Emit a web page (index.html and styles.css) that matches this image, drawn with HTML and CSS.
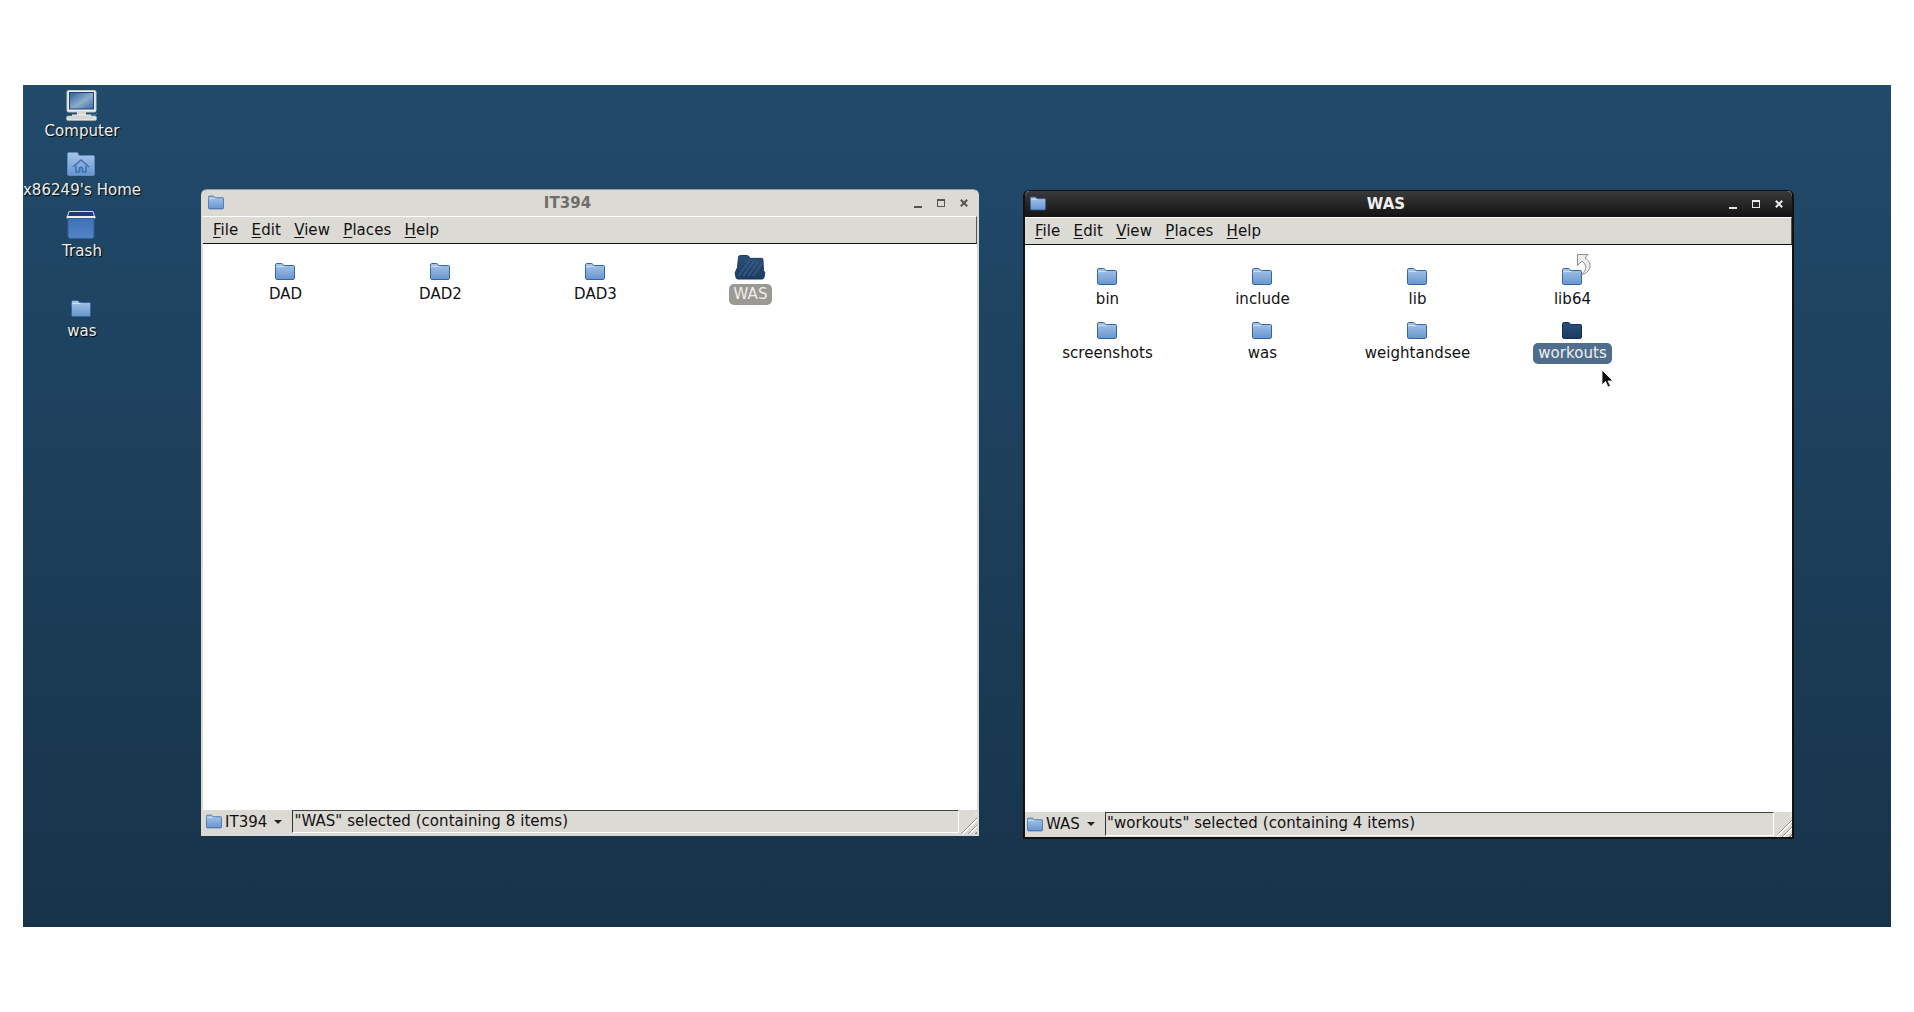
FILE: index.html
```html
<!DOCTYPE html>
<html lang="en">
<head>
    <meta charset="UTF-8">
    <title>Desktop</title>
    <link rel="stylesheet" href="styles.css">
</head>
<body>
    <svg class="defs" width="0" height="0">
        <defs>
            <linearGradient id="blue" x1="0" y1="0" x2="0" y2="1">
                <stop offset="0" stop-color="#a9c6e8"/>
                <stop offset="1" stop-color="#6695cf"/>
            </linearGradient>
            <linearGradient id="navy" x1="0" y1="0" x2="0" y2="1">
                <stop offset="0" stop-color="#2b5079"/>
                <stop offset="1" stop-color="#1b3b61"/>
            </linearGradient>
            <linearGradient id="screen" x1="0" y1="0" x2="1" y2="1">
                <stop offset="0" stop-color="#2f5e9e"/>
                <stop offset="0.55" stop-color="#8eacc9"/>
                <stop offset="1" stop-color="#3a6ba8"/>
            </linearGradient>
            <linearGradient id="bin" x1="0" y1="0" x2="0" y2="1">
                <stop offset="0" stop-color="#3d70b6"/>
                <stop offset="1" stop-color="#5485c6"/>
            </linearGradient>
            <symbol id="folder" viewBox="0 0 20 17">
                <path d="M.5 15V2C.5 1 1 .5 2 .5h4.500C7.500 .5 8 1.500 8.500 2.500H18.500c.6 0 1 .4 1 1V15c0 .8-.5 1.500-1.200 1.500H1.800C1 16.500 .5 15.800 .5 15z" fill="url(#blue)" stroke="#34659f"/>
                <path d="M1 4.500c0-.7.5-1 1-1h7l1-1" fill="none" stroke="#dbe7f5" stroke-width=".8"/>
            </symbol>
            <symbol id="folder-dark" viewBox="0 0 20 17">
                <path d="M.5 15V2C.5 1 1 .5 2 .5h4.500C7.500 .5 8 1.500 8.500 2.500H18.500c.6 0 1 .4 1 1V15c0 .8-.5 1.500-1.200 1.500H1.800C1 16.500 .5 15.800 .5 15z" fill="url(#navy)" stroke="#14304f"/>
            </symbol>
            <symbol id="close" viewBox="0 0 8 8">
                <path d="M.8 .8l6.400 6.400M7.200 .8L.8 7.200" fill="none" stroke="currentColor" stroke-width="2"/>
            </symbol>
        </defs>
    </svg>

    <div class="desktop">
        <div class="desk-icon desk-computer">
            <svg width="32" height="31" viewBox="0 0 32 31">
                <rect x="1" y=".5" width="29" height="21.500" rx="1.500" fill="#eceeea" stroke="#c4c6c1"/>
                <rect x="3.500" y="2.500" width="24" height="16.500" fill="url(#screen)" stroke="#1c3f86"/>
                <rect x="11" y="22" width="9" height="3" fill="#d6d8d3"/>
                <rect x="6" y="24.500" width="19" height="1.500" fill="#f4f5f2"/>
                <rect x=".5" y="26" width="30" height="4.500" rx="1.500" fill="#e4e4e0" stroke="#b0b1ac" stroke-width=".6"/>
                <path d="M2.500 28h26" stroke="#a9aaa5" stroke-dasharray="1 1"/>
                <path d="M25 25h4c1 0 1.500-1 2-2" fill="none" stroke="#5a8fc4"/>
            </svg>
            <span>Computer</span>
        </div>
        <div class="desk-icon desk-home">
            <svg width="28" height="25" viewBox="0 0 28 25">
                <path d="M.5 22V2C.5 1 1 .5 2 .5h8C11 .5 11.500 2 12 3.500h14c1 0 1.500.5 1.500 1.500v17c0 1-.6 1.500-1.500 1.500H2C1 23.500 .5 23 .5 22z" fill="url(#blue)" stroke="#5f8bc0"/>
                <path d="M6 15l8-7 8 7M9 14v6h3.500v-3.500c0-1.500 3-1.500 3 0V20H19v-6" fill="none" stroke="#3f70ad" stroke-width="1.600"/>
            </svg>
            <span>x86249's Home</span>
        </div>
        <div class="desk-icon desk-trash">
            <svg width="30" height="28" viewBox="0 0 30 28">
                <path d="M3 .5h24l1.500 5h-27z" fill="#1f3a7a" stroke="#d8dbd6"/>
                <rect x=".5" y="5" width="29" height="2.500" rx="1" fill="#eceeea"/>
                <path d="M2 7.500h26V25c0 1.500-1 2.500-2.500 2.500h-21C3 27.500 2 26.500 2 25z" fill="url(#bin)" stroke="#2f5f9e"/>
            </svg>
            <span>Trash</span>
        </div>
        <div class="desk-icon desk-was">
            <svg width="20" height="17"><use href="#folder"/></svg>
            <span>was</span>
        </div>

        <section class="window window-back">
            <header class="titlebar">
                <svg class="title-icon" width="16" height="15"><use href="#folder"/></svg>
                <span class="title-text">IT394</span>
                <div class="wm-buttons">
                    <span class="wm-min"></span><span class="wm-max"></span><svg class="wm-close" width="8" height="8"><use href="#close"/></svg>
                </div>
            </header>
            <nav class="menubar">
                <span><u>F</u>ile</span><span><u>E</u>dit</span><span><u>V</u>iew</span><span><u>P</u>laces</span><span><u>H</u>elp</span>
            </nav>
            <main class="files">
                <div class="file"><svg width="20" height="17"><use href="#folder"/></svg><span>DAD</span></div>
                <div class="file"><svg width="20" height="17"><use href="#folder"/></svg><span>DAD2</span></div>
                <div class="file"><svg width="20" height="17"><use href="#folder"/></svg><span>DAD3</span></div>
                <div class="file file-open">
                    <svg width="32" height="25" viewBox="0 0 32 26">
                        <path d="M3 13L4 2.500C4 1 5 .5 6 .5h7c1 0 2 1 3 3h12c1 0 1.500.5 1.500 1.500L30 16l1.500 2.500-1 5c-.2 1-1 1.500-2 1.500H3.500c-1 0-1.800-.5-2-1.500l-1-5z" fill="url(#navy)" stroke="#1a3759"/>
                        <path d="M9 22L21 5M14 22L25 6M19 22l10-14M4 22L16 5" stroke="#3a5f88" stroke-width="2" opacity=".7"/>
                    </svg>
                    <span class="label-back">WAS</span>
                </div>
            </main>
            <footer class="statusbar">
                <div class="location">
                    <svg width="16" height="15"><use href="#folder"/></svg>
                    <span>IT394</span>
                    <i class="caret"></i>
                </div>
                <div class="status-text">"WAS" selected (containing 8 items)</div>
                <div class="grip"></div>
            </footer>
        </section>

        <section class="window window-front">
            <header class="titlebar">
                <svg class="title-icon" width="16" height="15"><use href="#folder"/></svg>
                <span class="title-text">WAS</span>
                <div class="wm-buttons">
                    <span class="wm-min"></span><span class="wm-max"></span><svg class="wm-close" width="8" height="8"><use href="#close"/></svg>
                </div>
            </header>
            <nav class="menubar">
                <span><u>F</u>ile</span><span><u>E</u>dit</span><span><u>V</u>iew</span><span><u>P</u>laces</span><span><u>H</u>elp</span>
            </nav>
            <main class="files">
                <div class="file"><svg width="20" height="17"><use href="#folder"/></svg><span>bin</span></div>
                <div class="file"><svg width="20" height="17"><use href="#folder"/></svg><span>include</span></div>
                <div class="file"><svg width="20" height="17"><use href="#folder"/></svg><span>lib</span></div>
                <div class="file file-link">
                    <svg width="20" height="17"><use href="#folder"/></svg>
                    <svg class="link-arrow" width="15" height="22" viewBox="0 0 15 22">
                        <path d="M.5 .5H11L8 4c3 1.500 5.500 5 5 9-.5 4-5 7-10 8.500 4-2.500 6.500-6.500 5.500-9.500C8 9.500 6 8 5 7L.5 11.500z" fill="#ececea" stroke="#8f908b"/>
                    </svg>
                    <span>lib64</span>
                </div>
                <div class="file"><svg width="20" height="17"><use href="#folder"/></svg><span>screenshots</span></div>
                <div class="file"><svg width="20" height="17"><use href="#folder"/></svg><span>was</span></div>
                <div class="file"><svg width="20" height="17"><use href="#folder"/></svg><span>weightandsee</span></div>
                <div class="file"><svg width="20" height="17"><use href="#folder-dark"/></svg><span class="label-active">workouts</span></div>
                <svg class="cursor" width="13" height="20" viewBox="0 0 13 20">
                    <path d="M1 1v15l3.500-3.500L7 18l2.500-1L7 12h5z" fill="#111" stroke="#fff" stroke-width=".8"/>
                </svg>
            </main>
            <footer class="statusbar">
                <div class="location">
                    <svg width="16" height="15"><use href="#folder"/></svg>
                    <span>WAS</span>
                    <i class="caret"></i>
                </div>
                <div class="status-text">"workouts" selected (containing 4 items)</div>
                <div class="grip"></div>
            </footer>
        </section>
    </div>
</body>
</html>
```

FILE: styles.css
```css
body {
    margin: 0;
    padding: 85px 23px 85px 23px;
    background-color: #fff;
    font-family: "DejaVu Sans", sans-serif;
    font-size: 15px;
    line-height: 18px;
    letter-spacing: .05px;
    color: #111;
}

.defs {
    position: absolute;
}

.desktop {
    position: relative;
    width: 1868px;
    height: 842px;
    overflow: hidden;
    background: linear-gradient(#214a6b, #173349);
}

/* desktop icons */
.desk-icon {
    position: absolute;
    left: 0;
    width: 118px;
    display: flex;
    flex-direction: column;
    align-items: center;
    color: #eee;
    text-shadow: 1px 1px 1px #000;
    white-space: nowrap;
}

.desk-home svg,
.desk-trash svg,
.desk-was svg {
    margin-right: 2px;
}

.desk-computer { top: 5px; }
.desk-computer span { margin-top: 1px; }
.desk-home { top: 67px; }
.desk-home span { margin-top: 4px; }
.desk-trash { top: 126px; }
.desk-trash span { margin-top: 3px; }
.desk-was { top: 215px; }
.desk-was span { margin-top: 5px; }

/* windows */
.window {
    position: absolute;
    display: flex;
    flex-direction: column;
    box-sizing: border-box;
    background-color: #dcdad5;
    border-radius: 6px 6px 0 0;
}

.window-back {
    left: 178px;
    top: 104px;
    width: 778px;
    height: 647px;
    border: 2px solid #dcdad5;
    border-top-color: #9c9a94;
    border-top-width: 1px;
}

.window-front {
    left: 1000px;
    top: 105px;
    width: 771px;
    height: 649px;
    border: 2px solid #111;
    border-top-width: 1px;
}

.titlebar {
    position: relative;
    height: 26px;
    flex-shrink: 0;
    display: flex;
    align-items: center;
    justify-content: center;
    font-weight: bold;
    border-radius: 5px 5px 0 0;
}

.window-back .titlebar {
    color: #6e6e6a;
}

.window-front .titlebar {
    color: #f0f0f0;
    background: linear-gradient(#3a3a3a, #131313);
}

.title-icon {
    position: absolute;
    left: 5px;
    top: 5px;
}

.title-text {
    margin-left: -45px;
}

.wm-buttons {
    position: absolute;
    right: 9px;
    top: 9px;
    display: flex;
    align-items: flex-start;
    gap: 15px;
    color: #55554f;
}

.window-front .wm-buttons {
    color: #e8e8e8;
}

.wm-min {
    width: 8px;
    height: 2px;
    margin-top: 7px;
    background-color: currentColor;
}

.wm-max {
    box-sizing: border-box;
    width: 8px;
    height: 8px;
    border: 1px solid currentColor;
    border-top-width: 2px;
}

.wm-close {
    display: block;
}

.menubar {
    height: 26px;
    flex-shrink: 0;
    display: flex;
    align-items: center;
    gap: 13.3px;
    padding-left: 10px;
    border-top: 1px solid #fff;
    border-bottom: 1px solid #111;
    border-right: 1px solid #555;
}

.menubar u {
    text-underline-offset: 2px;
}

/* file grid */
.files {
    position: relative;
    flex: 1;
    background-color: #fff;
    display: grid;
    grid-template-columns: repeat(4, 155px);
    grid-auto-rows: 54px;
    align-content: start;
    padding: 17px 0 0 5px;
}

.window-front .files {
    padding-top: 21px;
    padding-left: 5px;
}

.file {
    position: relative;
    display: flex;
    flex-direction: column;
    align-items: center;
    justify-content: flex-end;
    height: 44px;
    gap: 4px;
}

.file svg {
    flex-shrink: 0;
    margin-right: 2px;
}

.file span {
    padding: 1px 5px 2px;
    border-radius: 5px;
}

.label-back {
    background-color: #9a9992;
    color: #eee;
}

.label-active {
    background-color: #4f6d8c;
    color: #f0f0f0;
}

.link-arrow {
    position: absolute;
    left: 82px;
    top: -12px;
}

.cursor {
    position: absolute;
    left: 576px;
    top: 124px;
}

/* bottom bar */
.statusbar {
    height: 24px;
    flex-shrink: 0;
    display: flex;
    align-items: stretch;
}

.window-front .statusbar {
    height: 25px;
}

.location {
    display: flex;
    align-items: center;
    gap: 3px;
    padding: 0 10px 1px 2px;
}

.window-back .location {
    padding-left: 3px;
}

.caret {
    margin-left: 4px;
    border: 4px solid transparent;
    border-top: 4px solid #222;
    border-bottom: none;
}

.status-text {
    flex: 1;
    display: flex;
    align-items: center;
    padding: 0 0 2px 1px;
    margin-bottom: 1px;
    border-top: 1px solid #444;
    border-left: 1px solid #333;
    border-right: 1px solid #fff;
    border-bottom: 1px solid #fff;
}

.grip {
    width: 18px;
    background: repeating-linear-gradient(135deg, #dcdad5 0 3px, #8f8d88 3px 4px, #fff 4px 5px);
    clip-path: polygon(100% 10%, 100% 100%, 10% 100%);
}
```
